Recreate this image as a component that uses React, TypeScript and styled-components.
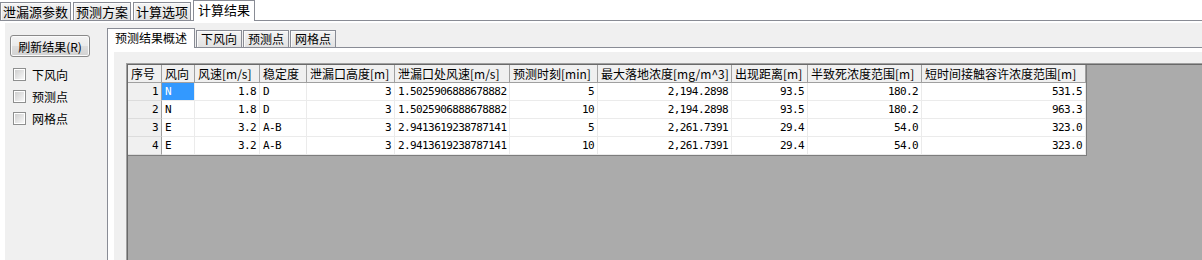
import React from 'react';
import styled, { createGlobalStyle } from 'styled-components';

const GlobalStyle = createGlobalStyle`
  html, body { margin: 0; padding: 0; background: #ffffff; }
  body { font-family: "Noto Sans CJK SC", "Noto Sans", sans-serif; font-size: 12px; color: #000; }
  * { box-sizing: border-box; }
`;

const COLS = '34px 33px 65px 47px 88px 115px 88px 134px 76px 114px 164px';

const headers = [
  '序号',
  '风向',
  '风速[m/s]',
  '稳定度',
  '泄漏口高度[m]',
  '泄漏口处风速[m/s]',
  '预测时刻[min]',
  '最大落地浓度[mg/m^3]',
  '出现距离[m]',
  '半致死浓度范围[m]',
  '短时间接触容许浓度范围[m]',
];

// which data columns are left aligned (text), the rest are numbers
const leftCols = [0, 2];

const rows = [
  ['N', '1.8', 'D', '3', '1.5025906888678882', '5', '2,194.2898', '93.5', '180.2', '531.5'],
  ['N', '1.8', 'D', '3', '1.5025906888678882', '10', '2,194.2898', '93.5', '180.2', '963.3'],
  ['E', '3.2', 'A-B', '3', '2.9413619238787141', '5', '2,261.7391', '29.4', '54.0', '323.0'],
  ['E', '3.2', 'A-B', '3', '2.9413619238787141', '10', '2,261.7391', '29.4', '54.0', '323.0'],
];

const Window = styled.div`
  width: 1202px;
  height: 260px;
  display: flex;
  flex-direction: column;
  background: #ffffff;
  overflow: hidden;
`;

const TopTabStrip = styled.div`
  height: 21px;
  display: flex;
  align-items: flex-end;
  gap: 2px;
  border-bottom: 1px solid #898c95;
`;

const TopTab = styled.div<{ $active?: boolean }>`
  height: ${(p) => (p.$active ? 21 : 18)}px;
  margin-bottom: ${(p) => (p.$active ? -1 : 0)}px;
  padding: 0 ${(p) => (p.$active ? 4 : 2)}px;
  border: 1px solid #898c95;
  border-bottom: none;
  background: ${(p) => (p.$active ? '#ffffff' : 'linear-gradient(#f4f4f4, #e2e2e2)')};
  box-shadow: ${(p) => (p.$active ? 'none' : 'inset 1px 1px 0 #fbfbfb')};
  font-size: 13px;
  line-height: ${(p) => (p.$active ? 18 : 17)}px;
  white-space: nowrap;
`;

const Page = styled.div`
  flex: 1;
  display: flex;
  padding: 2px 0 0 5px;
  background: #ffffff;
  min-height: 0;
`;

const Body = styled.div`
  flex: 1;
  display: flex;
  background: #f0f0f0;
  min-height: 0;
`;

const SidePanel = styled.div`
  width: 102px;
  display: flex;
  flex-direction: column;
  align-items: flex-start;
  padding: 12px 0 0 5px;
`;

const RefreshButton = styled.button`
  width: 80px;
  height: 22px;
  padding: 0;
  border: 1px solid #8a8a8a;
  border-radius: 3px;
  background: linear-gradient(#f4f4f4 0%, #ebebeb 48%, #dedede 52%, #d2d2d2 100%);
  box-shadow: inset 0 0 0 1px #fbfbfb;
  font-family: "Noto Sans CJK SC", sans-serif;
  font-size: 12px;
  line-height: 19px;
  color: #000;
`;

const CheckList = styled.div`
  display: flex;
  flex-direction: column;
  margin-top: 6px;
  padding-left: 3px;
`;

const CheckRow = styled.label`
  height: 22px;
  display: flex;
  align-items: center;
  gap: 6px;
  font-size: 12px;
`;

const CheckBox = styled.span`
  width: 13px;
  height: 13px;
  border: 1px solid #8e8f8f;
  background: #ffffff;
  padding: 1px;
  display: flex;

  &::after {
    content: '';
    flex: 1;
    background: linear-gradient(135deg, #cfcfcf, #f7f7f7);
  }
`;

const TabControl = styled.div`
  flex: 1;
  display: flex;
  flex-direction: column;
  min-width: 0;
`;

const InnerStrip = styled.div`
  height: 25px;
  display: flex;
  align-items: flex-end;
  gap: 1px;
  border-bottom: 1px solid #898c95;
`;

const InnerTab = styled.div<{ $active?: boolean }>`
  height: ${(p) => (p.$active ? 20 : 17)}px;
  margin-bottom: ${(p) => (p.$active ? -1 : 0)}px;
  padding: 0 ${(p) => (p.$active ? 7 : 4)}px;
  border: 1px solid #898c95;
  border-bottom: none;
  background: ${(p) => (p.$active ? '#ffffff' : 'linear-gradient(#f4f4f4, #e2e2e2)')};
  box-shadow: ${(p) => (p.$active ? 'none' : 'inset 1px 1px 0 #fbfbfb')};
  font-size: 12px;
  line-height: ${(p) => (p.$active ? 18 : 16)}px;
  white-space: nowrap;
`;

const InnerPage = styled.div`
  flex: 1;
  display: flex;
  border-left: 1px solid #898c95;
  background: #ffffff;
  padding: 4px 0 0 6px;
  min-height: 0;
`;

const ResultPanel = styled.div`
  flex: 1;
  display: flex;
  background: #f0f0f0;
  padding: 11px 0 0 12px;
  min-height: 0;
`;

const GridView = styled.div`
  flex: 1;
  background: #ababab;
  border-top: 1px solid #a0a0a0;
  border-left: 1px solid #a0a0a0;
  box-shadow: inset 1px 1px 0 #696969;
  padding: 1px 0 0 1px;
  overflow: hidden;
`;

const Table = styled.div`
  display: inline-flex;
  flex-direction: column;
  border-right: 1px solid #7d7d7d;
  border-bottom: 1px solid #7d7d7d;
`;

const Row = styled.div`
  display: grid;
  grid-template-columns: ${COLS};
`;

const HeadCell = styled.div`
  height: 18px;
  line-height: 17px;
  padding: 0 3px;
  background: #f0f0f0;
  border-right: 1px solid #a0a0a0;
  border-bottom: 1px solid #a0a0a0;
  font-size: 12px;
  white-space: nowrap;
  overflow: hidden;
`;

const RowHead = styled.div`
  height: 18px;
  line-height: 17px;
  padding: 0 3px;
  text-align: right;
  background: #f0f0f0;
  border-right: 1px solid #a0a0a0;
  border-bottom: 1px solid #dcdcdc;
  font-family: "DejaVu Sans Mono", monospace;
  font-size: 11px;
  letter-spacing: -0.6px;
`;

const Cell = styled.div<{ $left?: boolean; $selected?: boolean }>`
  height: 18px;
  line-height: 17px;
  padding: 0 3px;
  text-align: ${(p) => (p.$left ? 'left' : 'right')};
  background: ${(p) => (p.$selected ? '#3399ff' : '#ffffff')};
  color: ${(p) => (p.$selected ? '#ffffff' : '#000000')};
  border-right: 1px solid #ebebeb;
  border-bottom: 1px solid #ebebeb;
  font-family: "DejaVu Sans Mono", monospace;
  font-size: 11px;
  letter-spacing: -0.6px;
  white-space: nowrap;
  overflow: hidden;
`;

const App = () => {
  return (
    <Window>
      <GlobalStyle />
      <TopTabStrip>
        <TopTab>泄漏源参数</TopTab>
        <TopTab>预测方案</TopTab>
        <TopTab>计算选项</TopTab>
        <TopTab $active>计算结果</TopTab>
      </TopTabStrip>
      <Page>
        <Body>
          <SidePanel>
            <RefreshButton>刷新结果(R)</RefreshButton>
            <CheckList>
              {['下风向', '预测点', '网格点'].map((t) => (
                <CheckRow key={t}>
                  <CheckBox />
                  {t}
                </CheckRow>
              ))}
            </CheckList>
          </SidePanel>
          <TabControl>
            <InnerStrip>
              <InnerTab $active>预测结果概述</InnerTab>
              <InnerTab>下风向</InnerTab>
              <InnerTab>预测点</InnerTab>
              <InnerTab>网格点</InnerTab>
            </InnerStrip>
            <InnerPage>
              <ResultPanel>
                <GridView>
                  <Table>
                    <Row>
                      {headers.map((h) => (
                        <HeadCell key={h}>{h}</HeadCell>
                      ))}
                    </Row>
                    {rows.map((r, i) => (
                      <Row key={i}>
                        <RowHead>{i + 1}</RowHead>
                        {r.map((v, j) => (
                          <Cell key={j} $left={leftCols.includes(j)} $selected={i === 0 && j === 0}>
                            {v}
                          </Cell>
                        ))}
                      </Row>
                    ))}
                  </Table>
                </GridView>
              </ResultPanel>
            </InnerPage>
          </TabControl>
        </Body>
      </Page>
    </Window>
  );
};

export default App;
